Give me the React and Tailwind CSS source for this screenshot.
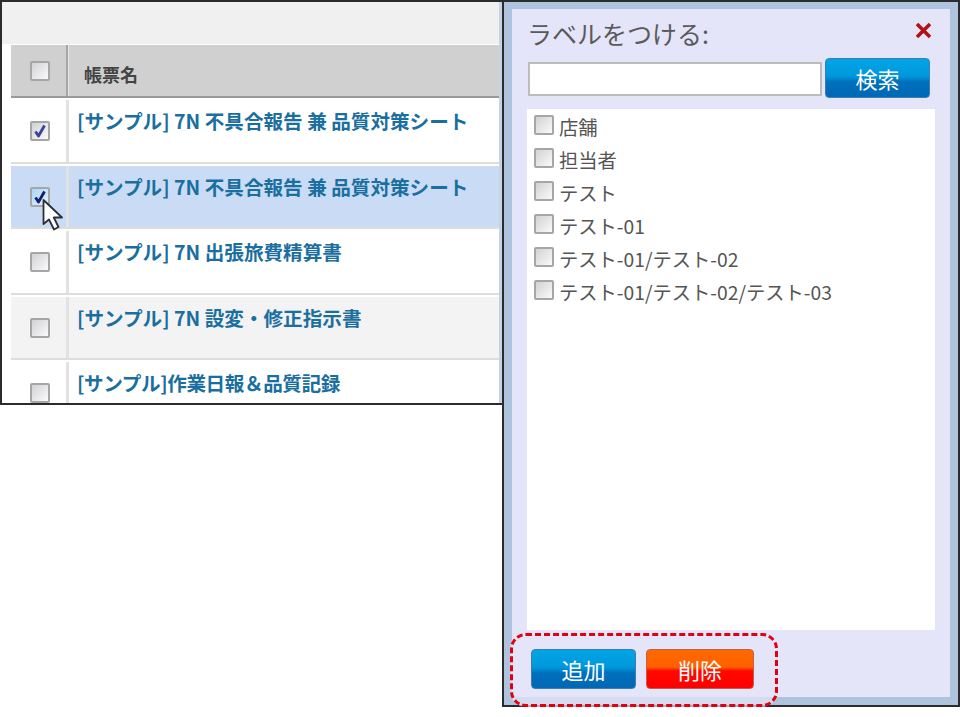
import React from 'react';

const jpFont = 'font-["Noto_Sans_CJK_JP","Noto_Sans",sans-serif]';

const rows = [
  { name: '[サンプル] 7N 不具合報告 兼 品質対策シート', checked: true, bg: 'bg-white' },
  { name: '[サンプル] 7N 不具合報告 兼 品質対策シート', checked: true, bg: 'bg-[#cadcf5]', active: true },
  { name: '[サンプル] 7N 出張旅費精算書', checked: false, bg: 'bg-white' },
  { name: '[サンプル] 7N 設変・修正指示書', checked: false, bg: 'bg-[#f3f3f3]' },
  { name: '[サンプル]作業日報＆品質記録', checked: false, bg: 'bg-white', tight: true },
];

const labels = ['店舗', '担当者', 'テスト', 'テスト-01', 'テスト-01/テスト-02', 'テスト-01/テスト-02/テスト-03'];

function Checkbox({ checked, active }) {
  return (
    <span
      className={`flex items-center justify-center w-[20px] h-[20px] shrink-0 border-2 border-[#a6a6a6] rounded-[2px] ${
        active ? 'bg-gradient-to-br from-[#a9d6f6] to-[#e4f3fd]' : 'bg-gradient-to-br from-[#d2d2d6] to-[#fafafa]'
      }`}
    >
      {checked && (
        <svg width="14" height="14" viewBox="0 0 14 14" fill="none">
          <path
            d="M2.5 7.5 L5.5 12 L11.5 1.5"
            stroke={active ? '#10206f' : '#39459a'}
            strokeWidth="2.8"
            strokeLinejoin="round"
          />
        </svg>
      )}
    </span>
  );
}

function Cursor() {
  return (
    <svg className="absolute left-[41px] top-[198px]" width="24" height="34" viewBox="0 0 24 34">
      <path
        d="M2.5 2 L2.5 26 L8 21.5 L13 31.5 L17.5 29 L12.8 19.5 L21 19.5 Z"
        fill="#ffffff"
        stroke="#2a2f3a"
        strokeWidth="1.8"
        strokeLinejoin="round"
      />
    </svg>
  );
}

function BlueButton({ children, className }) {
  return (
    <button
      className={`flex items-center justify-center rounded-[4px] border border-[#3b7fb5] text-white text-[22px] bg-[linear-gradient(#00a5e6_0%,#0098dc_45%,#0070bc_60%,#0068b5_100%)] ${className}`}
    >
      {children}
    </button>
  );
}

export default function App() {
  return (
    <div className={`relative flex items-start w-[960px] h-[717px] bg-white overflow-hidden ${jpFont}`}>
      {/* left: report list */}
      <div className="relative w-[502px] h-[405px] shrink-0 border-2 border-r-0 border-[#2b2b2b] bg-white overflow-hidden">
        <div className="h-[42px] bg-[#f0f0f0] mr-[3px]" />
        <div className="h-[1px] bg-white" />
        <div className="ml-[9px] mr-[3px]">
          <div className="flex h-[53px] bg-[#d0d0d0] border-b-2 border-[#9a9a9a]">
            <div className="pl-[19px] pt-[16px] w-[57px] border-r-2 border-[#a5a5a5]">
              <Checkbox />
            </div>
            <div className="flex-1 pl-[15px] pt-[17px] border-l border-[#e8e8e8] text-[18px] leading-[24px] font-bold text-[#444444]">
              帳票名
            </div>
          </div>
          {rows.map((row, i) => (
            <div key={i} className={`flex h-[63.5px] mt-[2px] border-b-2 border-[#dddddd] ${row.bg}`}>
              <div className="pl-[19px] pt-[21px] w-[58px] border-r-[3px] border-[#e2e2e2]">
                <Checkbox checked={row.checked} active={row.active} />
              </div>
              <div
                className={`flex-1 pl-[8px] pt-[6px] text-[19.6px] leading-[30px] font-bold text-[#1a6fa0] whitespace-nowrap ${
                  row.tight ? 'tracking-[-0.4px]' : ''
                }`}
              >
                {row.name}
              </div>
            </div>
          ))}
        </div>
        <div className="absolute top-0 right-0 bottom-0 w-[3px] bg-[#c4d3e6]" />
      </div>
      <Cursor />

      {/* right: label dialog */}
      <div className="w-[458px] h-[707px] shrink-0 border-2 border-[#2b2b2b] bg-[#aec3dd] pt-[7px] pl-[8px] pr-[8px] pb-[8px]">
        <div className="flex flex-col h-full bg-[#e5e5f9] pl-[15px] pr-[15px]">
          <div className="flex items-center justify-between h-[44px] pt-[4px]">
            <span className="text-[25px] leading-[34px] text-[#5a5a5a]">ラベルをつける:</span>
            <svg className="mr-[3px] mb-[6px]" width="17" height="17" viewBox="0 0 17 17">
              <path d="M2 2 L15 15 M15 2 L2 15" stroke="#b01217" strokeWidth="3.6" />
            </svg>
          </div>
          <div className="flex items-start h-[47px] pl-[1px] mt-[5px]">
            <input className="w-[294px] h-[34px] mt-[4px] bg-white border-2 border-[#bcbcbc] outline-none" />
            <BlueButton className="w-[105px] h-[40px] ml-[3px]">検索</BlueButton>
          </div>
          <div className="flex-1 bg-white w-[408px] mt-[4px] pl-[7px] pt-[6px] mb-[67px]">
            {labels.map((label) => (
              <label key={label} className="flex h-[33px] text-[19.3px] leading-[28px] text-[#555555] whitespace-nowrap">
                <Checkbox />
                <span className="ml-[5px] -mt-[2px]">{label}</span>
              </label>
            ))}
          </div>
        </div>
      </div>

      {/* highlighted buttons */}
      <div className="absolute left-[510px] top-[633px] flex items-start gap-[10px] w-[268px] h-[74px] pl-[18px] pt-[13px] border-[3px] border-dashed border-[#e00012] rounded-[16px] bg-[#e5e5f9]/70">
        <BlueButton className="w-[105px] h-[40px]">追加</BlueButton>
        <button className="flex items-center justify-center w-[108px] h-[40px] rounded-[4px] border border-[#c0604a] text-white text-[22px] bg-[linear-gradient(#ff6a00_0%,#ff6000_45%,#ff0800_55%,#ff0000_100%)]">
          削除
        </button>
      </div>
    </div>
  );
}
